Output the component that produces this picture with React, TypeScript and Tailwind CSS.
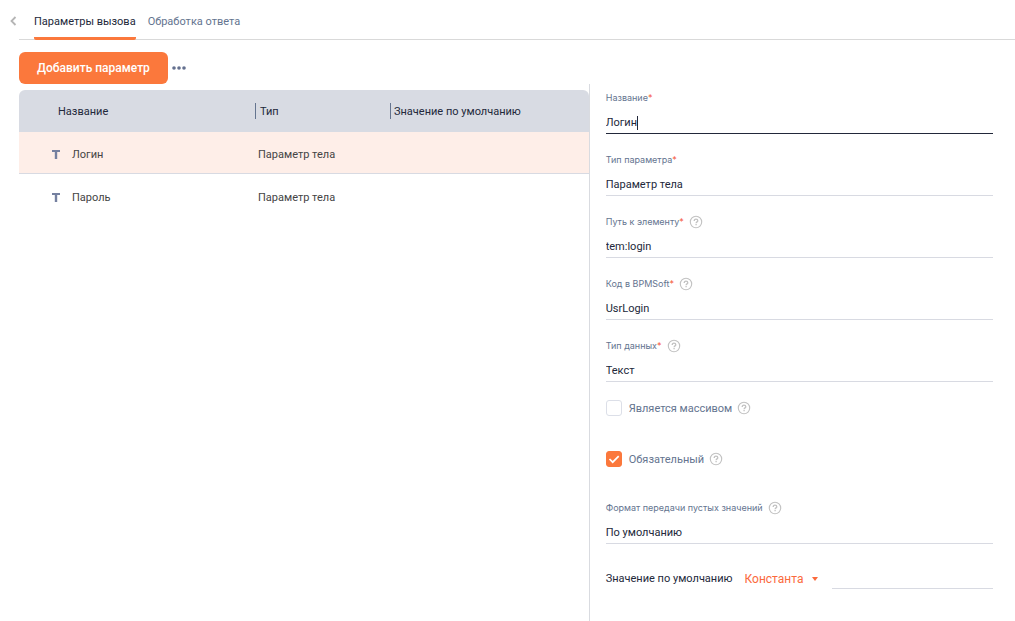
import { useState, type ReactNode } from 'react';

function HelpIcon() {
  return (
    <svg className="size-3 shrink-0 overflow-visible" viewBox="0 0 12 12" fill="none" stroke="#c2c2c2" role="img" aria-label="Справка">
      <circle cx="6" cy="6" r="5.7" strokeWidth="1.1" />
      <path d="M4.2 5C4.2 3.8 4.9 3.1 6 3.1s1.8.7 1.8 1.6c0 1.2-1.7 1.2-1.7 2.5" strokeWidth="1.3" />
      <path d="M6.1 8v1.3" strokeWidth="1.3" />
    </svg>
  );
}

interface FieldProps {
  id: string;
  label: string;
  required?: boolean;
  help?: boolean;
  active?: boolean;
  children: ReactNode;
}

function Field({ id, label, required, help, active, children }: FieldProps) {
  return (
    <div className="pt-1">
      <div className="flex h-5 items-center gap-1.5">
        <label htmlFor={id} className="font-['Inter','Liberation_Sans',sans-serif] text-[9px] leading-5 text-[#64748f]">
          {label}
          {required && <span className="text-[#f5573b]">*</span>}
        </label>
        {help && <HelpIcon />}
      </div>
      <div className={`flex h-[26px] items-center border-b pt-1 ${active ? 'border-[#22283a]' : 'border-[#d8dae2]'}`}>
        {children}
      </div>
    </div>
  );
}

function SelectInput({ id, value }: { id: string; value: string }) {
  return (
    <select id={id} className="w-full appearance-none bg-transparent outline-none" defaultValue={value}>
      <option>{value}</option>
    </select>
  );
}

interface CheckProps {
  label: string;
  checked: boolean;
  onChange: (v: boolean) => void;
}

function Check({ label, checked, onChange }: CheckProps) {
  return (
    <div className="flex h-4 items-center gap-1.5">
      <label className="flex items-center gap-[7px] text-[#64748f]">
        <span className="grid size-4">
          <input
            type="checkbox"
            checked={checked}
            onChange={(e) => onChange(e.target.checked)}
            className="col-start-1 row-start-1 size-4 appearance-none rounded-[3px] border border-[#dcdfe8] bg-white checked:border-[#fb783c] checked:bg-[#fb783c]"
          />
          {checked && (
            <svg className="pointer-events-none col-start-1 row-start-1 size-4" viewBox="0 0 16 16" fill="none" stroke="#fff" strokeWidth="1.7">
              <path d="M3.5 8l3.2 3.2 6-6" />
            </svg>
          )}
        </span>
        <span className="pt-0.5">{label}</span>
      </label>
      <HelpIcon />
    </div>
  );
}

const rows = [
  { name: 'Логин', type: 'Параметр тела', selected: true },
  { name: 'Пароль', type: 'Параметр тела', selected: false },
];

export default function App() {
  const [isArray, setIsArray] = useState(false);
  const [isRequired, setIsRequired] = useState(true);
  const [name, setName] = useState('Логин');

  return (
    <div className="flex min-h-screen flex-col bg-white font-['Roboto','Liberation_Sans',sans-serif] text-[11px] leading-4 text-[#22283a]">
      <nav className="flex h-10">
        <button aria-label="Назад" className="flex w-[19px] items-center justify-end pr-[2px] pt-[2px]">
          <svg className="h-2.5 w-2" viewBox="0 0 8 10" fill="none" stroke="#b5b5b5" strokeWidth="1.8">
            <path d="M6.5 1l-4 4 4 4" />
          </svg>
        </button>
        <div className="flex flex-1 gap-3 border-b border-[#d9d9d9] pl-[15px]">
          <a href="#params" className="-mb-px flex items-center rounded-b-xs border-b-3 border-[#fb783c] pt-1.5">Параметры вызова</a>
          <a href="#response" className="flex items-center pt-1 text-[#64748f]">Обработка ответа</a>
        </div>
      </nav>

      <div className="flex items-center gap-1 pt-3 pl-[19px]">
        <button className="h-8 rounded-md bg-[#fb783c] px-[18px] text-[12px] font-medium text-white">Добавить параметр</button>
        <button aria-label="Ещё" className="flex h-8 items-center">
          <svg className="h-1 w-3.5" viewBox="0 0 14 4" fill="#64708f">
            <circle cx="2" cy="2" r="1.8" />
            <circle cx="7" cy="2" r="1.8" />
            <circle cx="12" cy="2" r="1.8" />
          </svg>
        </button>
      </div>

      <div className="grid flex-1 grid-cols-[58fr_42fr]">
        <div className="pt-1.5 pl-[19px]">
          <table className="w-full border-separate border-spacing-0 text-left">
            <thead>
              <tr className="h-[42px] bg-[#d8dbe3]">
                <th className="w-[236px] rounded-tl-md pt-0.5 pl-[39px] font-normal">Название</th>
                <th className="w-[135px] font-normal">
                  <div className="flex h-4 items-center border-l border-[#64748f] pt-0.5 pl-1">Тип</div>
                </th>
                <th className="rounded-tr-md font-normal">
                  <div className="flex h-4 items-center border-l border-[#64748f] pt-0.5 pl-[3px]">Значение по умолчанию</div>
                </th>
              </tr>
            </thead>
            <tbody className="text-[#444]">
              {rows.map((r) => (
                <tr key={r.name} className={r.selected ? 'h-[42px] bg-[#feeee8] *:border-b *:border-[#d8dae2]' : 'h-[44px]'}>
                  <td className="pt-1 pl-[33px]">
                    <div className="flex items-center gap-3">
                      <svg className="h-[10px] w-2" viewBox="0 0 8 10" fill="none" stroke="#7580a0" strokeWidth="2">
                        <path d="M0 1h8" />
                        <path d="M4 1v8" strokeWidth="2.4" />
                      </svg>
                      {r.name}
                    </div>
                  </td>
                  <td className="pt-1 pl-[3px]">{r.type}</td>
                  <td />
                </tr>
              ))}
            </tbody>
          </table>
        </div>

        <form className="border-l border-[#d9dbe0] pr-[22px] pl-4">
          <div className="flex flex-col gap-3">
            <Field id="name" label="Название" required active>
              <input
                id="name"
                value={name}
                onChange={(e) => setName(e.target.value)}
                className="field-sizing-content caret-transparent outline-none"
              />
              <span className="h-3.5 w-px bg-[#22283a]" />
            </Field>
            <Field id="kind" label="Тип параметра" required>
              <SelectInput id="kind" value="Параметр тела" />
            </Field>
            <Field id="path" label="Путь к элементу" required help>
              <input id="path" defaultValue="tem:login" className="w-full outline-none" />
            </Field>
            <Field id="code" label="Код в BPMSoft" required help>
              <input id="code" defaultValue="UsrLogin" className="w-full outline-none" />
            </Field>
            <Field id="data" label="Тип данных" required help>
              <SelectInput id="data" value="Текст" />
            </Field>
          </div>
          <div className="flex flex-col gap-[35px] pt-[18px] pb-[27px]">
            <Check label="Является массивом" checked={isArray} onChange={setIsArray} />
            <Check label="Обязательный" checked={isRequired} onChange={setIsRequired} />
          </div>
          <Field id="empty" label="Формат передачи пустых значений" help>
            <SelectInput id="empty" value="По умолчанию" />
          </Field>
          <div className="flex items-center pt-6">
            <label htmlFor="default">Значение по умолчанию</label>
            <div className="ml-3 flex items-center gap-2">
              <select aria-label="Источник значения" className="appearance-none text-[12px] text-[#fb6a3c] outline-none">
                <option>Константа</option>
              </select>
              <svg className="h-1 w-1.5" viewBox="0 0 6 4" fill="#fb6a3c">
                <path d="M0 0h6L3 4z" />
              </svg>
            </div>
            <input id="default" className="ml-3.5 h-[21px] min-w-0 flex-1 border-b border-[#d8dae2] outline-none" />
          </div>
        </form>
      </div>
    </div>
  );
}
